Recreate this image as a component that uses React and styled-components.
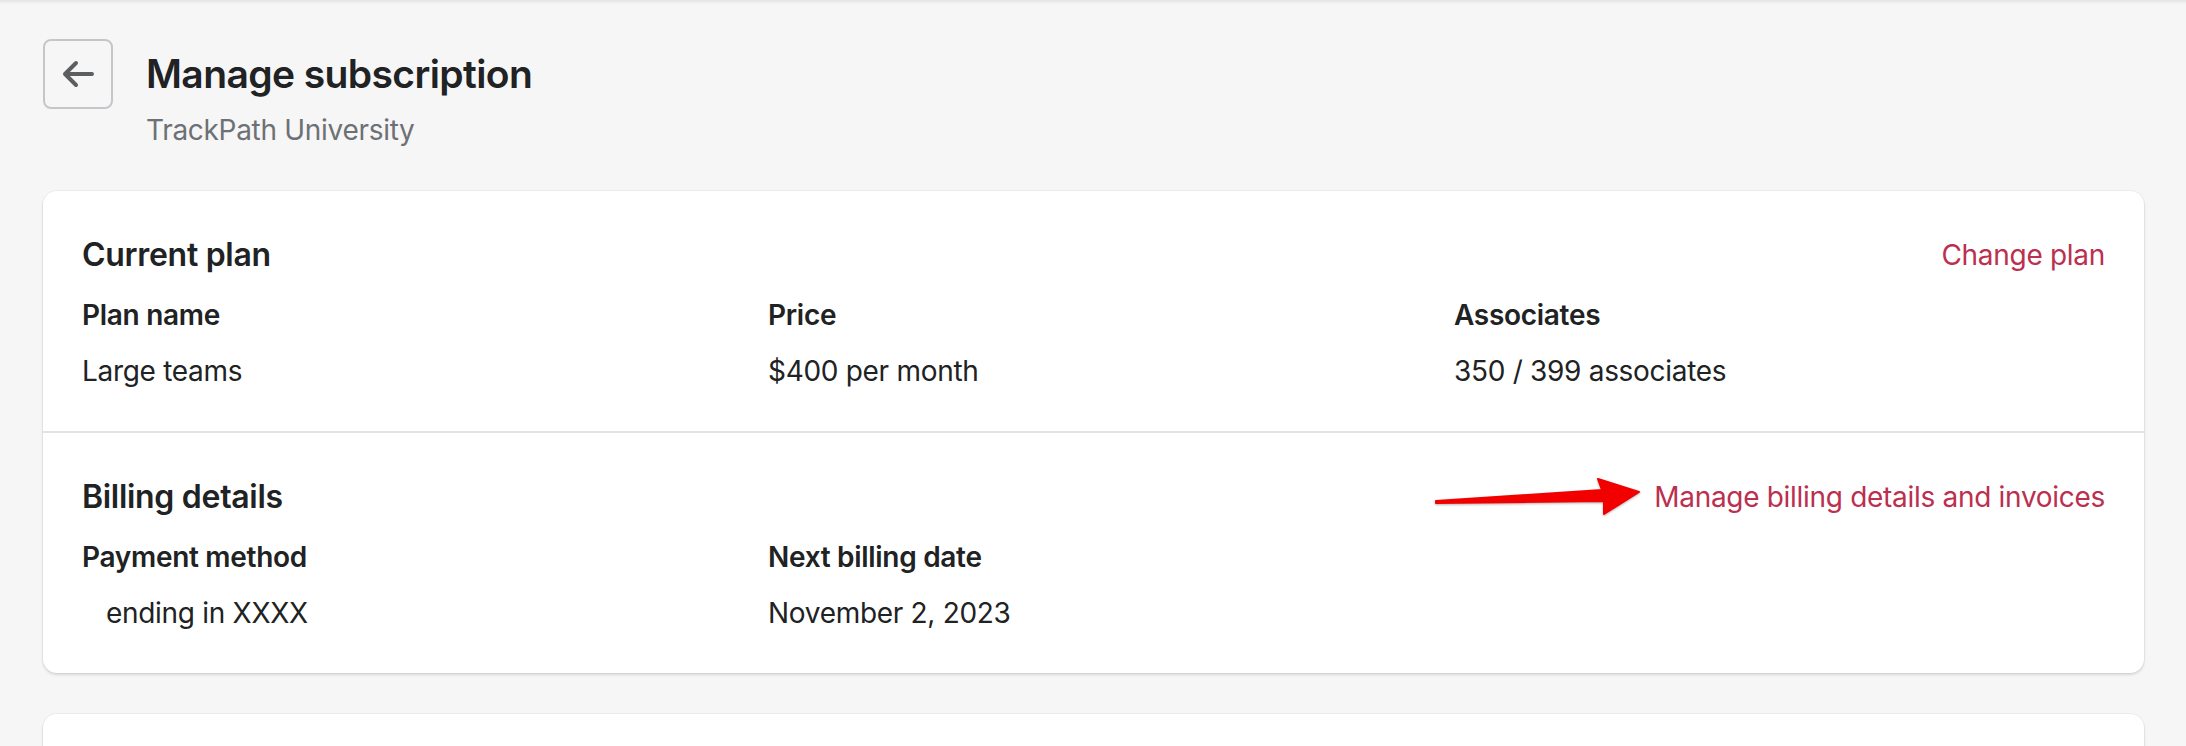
import React from 'react';
import styled, { createGlobalStyle } from 'styled-components';

const Global = createGlobalStyle`
  html, body { margin: 0; padding: 0; background: #f6f6f6; }
  body { font-family: Inter, "Noto Sans", "Liberation Sans", sans-serif; color: #202223; }
`;

const Page = styled.div`
  height: 746px;
  overflow: hidden;
  background: linear-gradient(#e2e2e2, #f6f6f6 4px) no-repeat;
  padding: 39px 42px 0 43px;
  box-sizing: border-box;
`;

const Header = styled.div`display: flex; align-items: flex-start; gap: 33px; margin-bottom: 41px;`;

const BackButton = styled.button`
  width: 70px; height: 70px; box-sizing: border-box;
  border: 2px solid #c4c7ca; border-radius: 8px; background: transparent;
  display: flex; align-items: center; justify-content: center; padding: 0; cursor: pointer;
`;

const TitleWrap = styled.div`display: flex; flex-direction: column; gap: 12px; padding-top: 11px;`;
const Title = styled.h1`margin: 0; font-size: 39px; line-height: 48px; font-weight: 600; letter-spacing: -0.6px;`;
const Subtitle = styled.div`font-size: 28px; line-height: 40px; color: #6d7175; letter-spacing: -0.3px;`;

const Card = styled.div`
  background: #fff; border-radius: 14px;
  box-shadow: 0 2px 3px rgba(0,0,0,0.12), 0 0 0 1px rgba(0,0,0,0.04);
  margin-bottom: 41px;
  min-height: ${p => p.$minHeight || 0}px;
`;

const Section = styled.div`
  padding: 40px 39px;
  & + & { border-top: 2px solid #e1e3e5; }
`;

const SectionHead = styled.div`display: flex; align-items: center; justify-content: space-between; height: 48px; margin-bottom: 16px;`;
const SectionTitle = styled.h2`margin: 0; font-size: 32px; font-weight: 600; line-height: 48px; letter-spacing: -0.3px;`;

const LinkWrap = styled.div`display: flex; align-items: center; gap: 10px;`;
const Action = styled.a`color: #bb2f4f; font-size: 28px; line-height: 40px; text-decoration: none; cursor: pointer; letter-spacing: -0.3px;`;

const Grid = styled.div`display: grid; grid-template-columns: repeat(3, 1fr); column-gap: 35px; row-gap: 16px;`;
const Field = styled.div`display: flex; flex-direction: column; gap: 16px;`;
const Label = styled.div`font-size: 28px; line-height: 40px; font-weight: 600; letter-spacing: -0.3px;`;
const Value = styled.div`font-size: 28px; line-height: 40px; letter-spacing: -0.3px; padding-left: ${p => p.$indent ? '24px' : '0'};`;

const Pointer = () => (
  <svg width="210" height="44" viewBox="0 0 210 44" style={{ filter: 'drop-shadow(0 1px 1px rgba(0,0,0,0.3))' }}>
    <path d="M2 26 L168 15 L164 4 L205 17 L170 39 L170 26 L2 28 Z" fill="#f20000" stroke="#f20000" strokeWidth="2" strokeLinejoin="round" />
  </svg>
);

const ArrowLeft = () => (
  <svg width="34" height="30" viewBox="0 0 34 30" fill="none" stroke="#5c5f62" strokeWidth="4" strokeLinecap="round" strokeLinejoin="round">
    <path d="M31 15 H4 M15 4 L4 15 L15 26" />
  </svg>
);

export default function App() {
  return (
    <>
      <Global />
      <Page>
        <Header>
          <BackButton aria-label="Back"><ArrowLeft /></BackButton>
          <TitleWrap>
            <Title>Manage subscription</Title>
            <Subtitle>TrackPath University</Subtitle>
          </TitleWrap>
        </Header>
        <Card>
          <Section>
            <SectionHead>
              <SectionTitle>Current plan</SectionTitle>
              <Action>Change plan</Action>
            </SectionHead>
            <Grid>
              <Field><Label>Plan name</Label><Value>Large teams</Value></Field>
              <Field><Label>Price</Label><Value>$400 per month</Value></Field>
              <Field><Label>Associates</Label><Value>350 / 399 associates</Value></Field>
            </Grid>
          </Section>
          <Section>
            <SectionHead>
              <SectionTitle>Billing details</SectionTitle>
              <LinkWrap>
                <Pointer />
                <Action>Manage billing details and invoices</Action>
              </LinkWrap>
            </SectionHead>
            <Grid>
              <Field><Label>Payment method</Label><Value $indent>ending in XXXX</Value></Field>
              <Field><Label>Next billing date</Label><Value>November 2, 2023</Value></Field>
            </Grid>
          </Section>
        </Card>
        <Card $minHeight={120} />
      </Page>
    </>
  );
}
